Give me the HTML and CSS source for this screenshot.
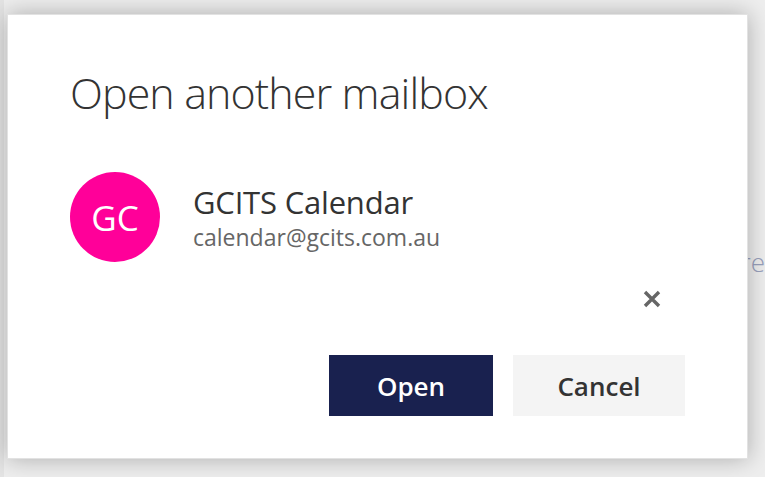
FILE: index.html
```html
<!DOCTYPE html>
<html lang="en">
<head>
    <meta charset="UTF-8">
    <meta name="viewport" content="width=device-width, initial-scale=1.0">
    <title>Open another mailbox</title>
    <link rel="stylesheet" href="styles.css">
</head>
<body>
    <div class="app">
        <div class="sidebar"></div>
        <div class="main">
            <span class="behind">Share</span>
        </div>
    </div>

    <div class="dialog">
        <h1 class="title">Open another mailbox</h1>

        <div class="person">
            <div class="avatar">GC</div>
            <div class="info">
                <div class="name">GCITS Calendar</div>
                <div class="email">calendar@gcits.com.au</div>
            </div>
        </div>

        <div class="remove">
            <svg width="18" height="18" viewBox="0 0 18 18">
                <path d="M2 2 L16 16 M16 2 L2 16" stroke="#666" stroke-width="3.4" fill="none"/>
            </svg>
        </div>

        <div class="actions">
            <button class="btn primary">Open</button>
            <button class="btn">Cancel</button>
        </div>
    </div>
</body>
</html>
```

FILE: styles.css
```css
body {
    margin: 0;
    height: 477px;
    overflow: hidden;
    font-family: "Open Sans", "Noto Sans", sans-serif;
    background: #eeeeee;
}
.app {
    display: flex;
    height: 100%;
}
.sidebar {
    width: 32px;
    background: #e4e4e4;
}
.main {
    flex: 1;
    padding: 244px 0 0 693px;
}
.behind {
    font-size: 26px;
    color: #98a0bc;
    font-weight: 300;
}
.dialog {
    position: absolute;
    top: 14px;
    left: 7px;
    width: 741px;
    height: 445px;
    box-sizing: border-box;
    background: white;
    border: 1px solid #e2e2e2;
    box-shadow: 0 0 22px rgba(0, 0, 0, 0.28);
    padding: 50px 62px 0 62px;
    display: flex;
    flex-direction: column;
}
.title {
    margin: 0;
    font-size: 43px;
    line-height: 56px;
    font-weight: 300;
    color: #333;
    letter-spacing: -0.9px;
}
.person {
    margin-top: 51px;
    display: flex;
    align-items: flex-start;
}
.avatar {
    width: 90px;
    height: 90px;
    border-radius: 50%;
    background: #ff0099;
    color: white;
    font-size: 35px;
    display: flex;
    align-items: center;
    justify-content: center;
}
.info {
    margin-left: 33px;
    padding-top: 11px;
}
.name {
    font-size: 31px;
    line-height: 38px;
    color: #333;
    letter-spacing: -0.2px;
}
.email {
    margin-top: 1px;
    font-size: 23px;
    line-height: 30px;
    color: #666;
}
.remove {
    margin-top: 28px;
    margin-right: 24px;
    display: flex;
    justify-content: flex-end;
}
.remove svg {
    display: block;
}
.actions {
    margin-top: 47px;
    display: flex;
    justify-content: flex-end;
    gap: 20px;
}
.btn {
    height: 61px;
    width: 172px;
    border: none;
    background: #f4f4f4;
    color: #333;
    font-family: "Open Sans", "Noto Sans", sans-serif;
    font-size: 26px;
    font-weight: 600;
    cursor: pointer;
}
.btn.primary {
    width: 164px;
    background: #19214f;
    color: white;
}
```
